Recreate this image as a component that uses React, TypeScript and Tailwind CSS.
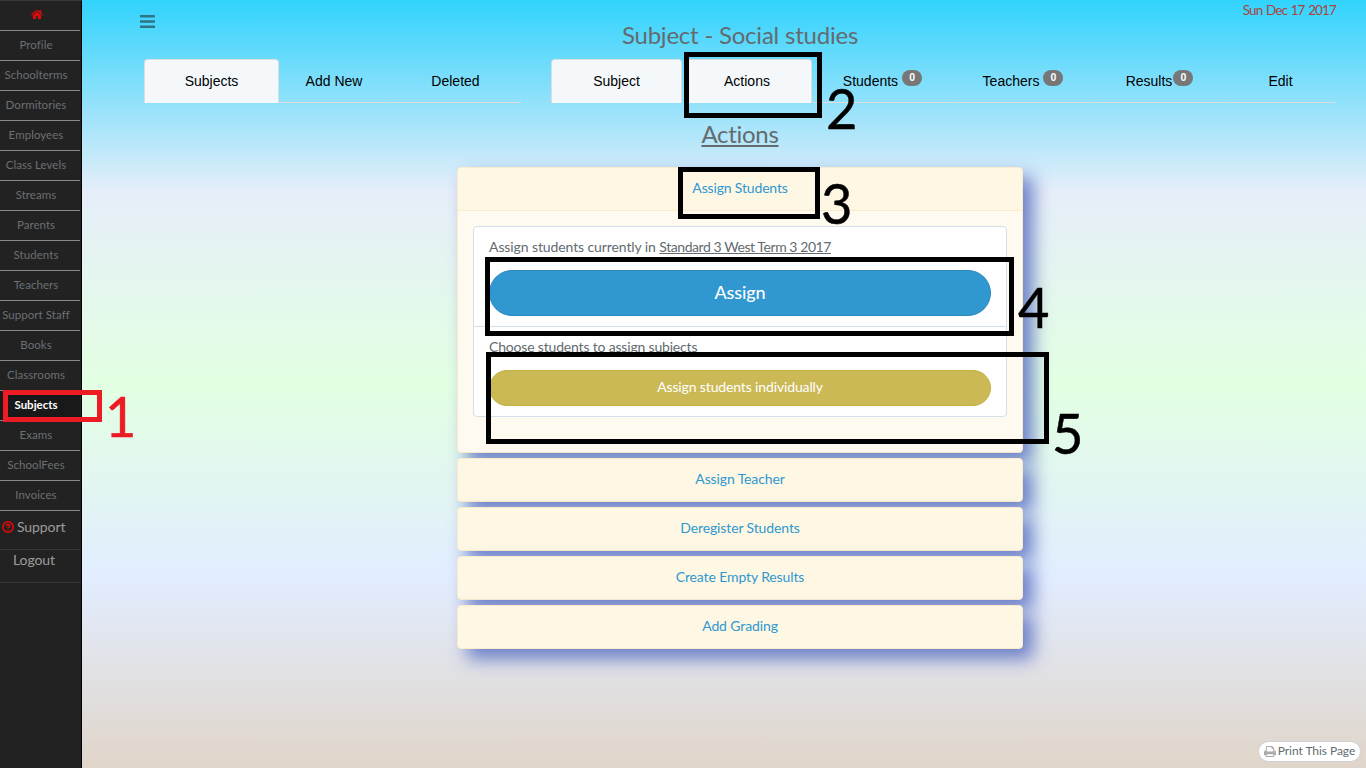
const navItems = [
  "Profile",
  "Schoolterms",
  "Dormitories",
  "Employees",
  "Class Levels",
  "Streams",
  "Parents",
  "Students",
  "Teachers",
  "Support Staff",
  "Books",
  "Classrooms",
  "Subjects",
  "Exams",
  "SchoolFees",
  "Invoices",
];

function HomeIcon() {
  return (
    <svg viewBox="0 0 1664 1792" className="h-[13px] w-[12px] fill-[#d80c0c]">
      <path d="M1408 992v480q0 26-19 45t-45 19h-384v-384h-256v384h-384q-26 0-45-19t-19-45v-480q0-1 .5-3t.5-3l575-474 575 474q1 2 1 6zm223-69l-62 74q-8 9-21 11h-3q-13 0-21-7l-692-577-692 577q-12 8-24 7-13-2-21-11l-62-74q-8-10-7-23.5t11-21.5l719-599q32-26 76-26t76 26l244 204v-195q0-14 9-23t23-9h192q14 0 23 9t9 23v408l219 182q10 8 11 21.5t-7 23.5z" />
    </svg>
  );
}

function HelpIcon() {
  return (
    <svg viewBox="0 0 12 12" className="h-3 w-3 fill-none stroke-[#d80c0c]">
      <circle cx="6" cy="6" r="5.2" strokeWidth="1.6" />
      <path d="M4.2 4.7Q4.6 3.4 6 3.4Q7.8 3.5 7.7 4.8Q7.6 5.6 6.7 6Q6.1 6.3 6.1 7.1M6.1 7.9V9.3" strokeWidth="1.6" />
    </svg>
  );
}

function MenuIcon() {
  return (
    <svg viewBox="0 0 15 13" className="h-[13px] w-[15px] fill-[#2f7386]">
      <rect y="0" width="15" height="2.6" rx="0.6" />
      <rect y="5.2" width="15" height="2.6" rx="0.6" />
      <rect y="10.4" width="15" height="2.6" rx="0.6" />
    </svg>
  );
}

function PrintIcon() {
  return (
    <svg viewBox="0 0 1664 1792" className="-mr-px h-[13px] w-[12px] fill-[#aaa]">
      <path d="M384 1536h896v-256h-896v256zm0-640h896v-384h-160q-40 0-68-28t-28-68v-160h-640v640zm1152 64q0-26-19-45t-45-19-45 19-19 45 19 45 45 19 45-19 19-45zm128 0v416q0 13-9.500 22.500t-22.500 9.500h-224v160q0 40-28 68t-68 28h-960q-40 0-68-28t-28-68v-160h-224q-13 0-22.500-9.500t-9.500-22.500v-416q0-79 56.500-135.500t135.500-56.500h64v-544q0-40 28-68t68-28h672q40 0 88 20t76 48l152 152q28 28 48 76t20 88v256h64q79 0 135.500 56.500t56.500 135.500z" />
    </svg>
  );
}

type TabProps = { label: string; active?: boolean; badge?: boolean; cls: string; tight?: boolean };

function Tab({ label, active, badge, cls, tight }: TabProps) {
  return (
    <div
      className={`flex h-11 justify-center font-['Liberation_Sans',sans-serif] text-[14px] leading-5 text-black ${cls} ${
        active ? "rounded-t border border-b-0 border-[#ddd] bg-[#f4f8fb] pt-[11px]" : "border-b border-[#ddd] pt-3"
      }`}
    >
      <span>{label}</span>
      {badge && (
        <span
          className={`-mt-px h-4 w-5 rounded-[10px] bg-[#777] text-center text-[10.5px] leading-[15px] font-bold text-white ${
            tight ? "ml-px" : "ml-1"
          }`}
        >
          0
        </span>
      )}
    </div>
  );
}

const closedPanels = ["Assign Teacher", "Deregister Students", "Create Empty Results", "Add Grading"];

function Sidebar() {
  return (
    <aside className="h-full w-[82px] shrink-0 border-t border-r border-t-[#3a3a3a] border-r-black bg-[#222]">
      <div className="flex h-[30px] w-20 items-center justify-center border-b border-[#888] pr-[7px] pb-[2px]">
        <HomeIcon />
      </div>
      {navItems.map((label) => (
        <div
          key={label}
          className={`flex h-[30px] w-20 items-center justify-center border-b border-[#888] pr-2 pb-px text-[11.5px] whitespace-nowrap ${
            label === "Subjects" ? "bg-[#191919] font-bold text-white" : "tracking-[0.05px] text-[#6b7074]"
          }`}
        >
          {label}
        </div>
      ))}
      <div className="flex h-[39px] items-center gap-[3px] border-b border-[#363636] pb-[7px] pl-[2px] text-[14px] tracking-[-0.1px] text-[#9d9d9d]">
        <HelpIcon />
        Support
      </div>
      <div className="flex h-[33px] items-center border-b border-[#363636] pb-[13px] pl-[13px] text-[14px] tracking-[-0.1px] text-[#9d9d9d]">
        Logout
      </div>
    </aside>
  );
}

function AssignPanel() {
  return (
    <section className="h-[286px] rounded border border-[#faebcc] bg-[#fffaf0] shadow-[10px_10px_18px_#6c7fc8]">
      <h4 className="h-[43px] rounded-t border-b border-[#faebcc] bg-[#fdf7e3] pt-[10px] text-center text-[14px] leading-5 tracking-[-0.16px] text-[#3097d1]">
        Assign Students
      </h4>
      <div className="mx-[15px] mt-[15px] h-[191px] rounded border border-[#d3e0e9] bg-white">
        <div className="h-[100px] border-b border-[#d3e0e9] px-[15px] pt-[9px]">
          <p className="text-[14px] leading-[22px] tracking-[-0.1px]">
            Assign students currently in{" "}
            <span className="tracking-[-0.43px] underline">Standard 3 West Term 3 2017</span>
          </p>
          <button className="mt-[12px] h-[46px] w-full rounded-[23px] border border-[#2a88bd] bg-[#3097d1] pb-px text-[18px] font-medium tracking-[-0.1px] text-white">
            Assign
          </button>
        </div>
        <div className="px-[15px] pt-[9px]">
          <p className="text-[14px] leading-[22px] tracking-[-0.18px]">Choose students to assign subjects</p>
          <button className="mt-[12px] h-9 w-full rounded-[18px] border border-[#c5b143] bg-[#cbb956] pb-[3px] text-[14px] tracking-[-0.14px] text-white">
            Assign students individually
          </button>
        </div>
      </div>
    </section>
  );
}

function Annotations() {
  return (
    <div className="pointer-events-none absolute inset-0 font-[Lato,sans-serif] text-[57px] leading-none text-black [-webkit-text-stroke:0.5px_currentColor]">
      <div className="absolute top-[390px] left-[3px] h-8 w-[99px] border-5 border-[#ed1c24]" />
      <span className="absolute top-[387px] left-[105px] origin-left scale-x-95 text-[#ed1c24]">1</span>
      <div className="absolute top-[52px] left-[684px] h-[66px] w-[138px] border-5 border-black" />
      <span className="absolute top-[79px] left-[826px] origin-left scale-x-95">2</span>
      <div className="absolute top-[167px] left-[678px] h-[52px] w-[142px] border-5 border-black" />
      <span className="absolute top-[174px] left-[821px] origin-left scale-x-95">3</span>
      <div className="absolute top-[257px] left-[485px] h-[79px] w-[529px] border-5 border-black" />
      <span className="absolute top-[278px] left-[1018px] origin-left scale-x-95">4</span>
      <div className="absolute top-[352px] left-[486px] h-[92px] w-[563px] border-5 border-black" />
      <span className="absolute top-[404px] left-[1052px] origin-left scale-x-95">5</span>
    </div>
  );
}

export default function App() {
  return (
    <div className="relative flex h-[768px] w-[1366px] overflow-hidden bg-[linear-gradient(#31d3fd_0%,#e6eef9_25%,#e2ffe2_50%,#e2edff_75%,#e0d5c9_100%)] font-[Lato,sans-serif] text-[#636b6f]">
      <Sidebar />
      <main className="flex grow pl-[62px]">
        <div className="w-[377px]">
          <div className="-ml-1 h-[59px] pt-[15px]">
            <MenuIcon />
          </div>
          <div className="flex">
            <Tab label="Subjects" active cls="w-[135px]" />
            <Tab label="Add New" cls="w-[110px]" />
            <Tab label="Deleted" cls="ml-px w-[131px]" />
          </div>
        </div>
        <div className="ml-[30px] w-[785px]">
          <div className="flex h-[22px] justify-end text-[13.5px] leading-[20px] tracking-[-0.87px] text-[#a94442] [word-spacing:1px]">
            Sun Dec 17 2017
          </div>
          <h1 className="h-[37px] w-[378px] text-center text-[24px] leading-[25px] tracking-[-0.22px]">
            Subject - Social studies
          </h1>
          <div className="flex">
            <Tab label="Subject" active cls="w-[131px]" />
            <Tab label="Actions" active cls="ml-[2px] w-[128px] pr-[2px]" />
            <Tab label="Students" badge cls="ml-px w-[139px]" />
            <Tab label="Teachers" badge cls="ml-px w-[140px]" />
            <Tab label="Results" badge tight cls="ml-px w-[131px]" />
            <Tab label="Edit" cls="ml-px w-[109px]" />
          </div>
          <h2 className="mt-[17px] h-[47px] w-[378px] text-center text-[24px] leading-[27px] tracking-[-0.3px] underline">
            Actions
          </h2>
          <div className="-ml-[94px] flex w-[566px] flex-col gap-[5px]">
            <AssignPanel />
            {closedPanels.map((title) => (
              <section
                key={title}
                className="h-11 rounded border border-[#faebcc] bg-[#fdf7e3] pt-[10px] text-center text-[14px] leading-5 tracking-[-0.12px] text-[#3097d1] shadow-[10px_10px_18px_#6c7fc8]"
              >
                {title}
              </section>
            ))}
          </div>
        </div>
      </main>
      <button className="absolute top-[741px] left-[1258px] flex h-[21px] w-[103px] items-center justify-center gap-[3px] rounded-full border border-[#ccd0d2] bg-white pb-px text-[12px] tracking-[-0.05px] whitespace-nowrap">
        <PrintIcon />
        Print This Page
      </button>
      <Annotations />
    </div>
  );
}
